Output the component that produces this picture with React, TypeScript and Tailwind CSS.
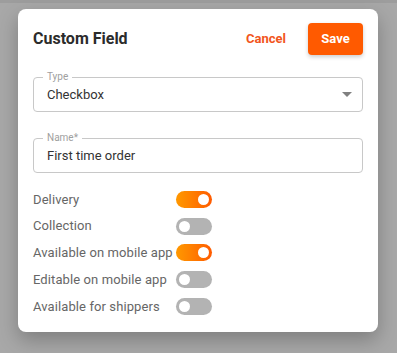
import React, { useState } from 'react'

type Opt = { label: string; on: boolean }

const initial: Opt[] = [
  { label: 'Delivery', on: true },
  { label: 'Collection', on: false },
  { label: 'Available on mobile app', on: true },
  { label: 'Editable on mobile app', on: false },
  { label: 'Available for shippers', on: false },
]

function Toggle({ on, onClick }: { on: boolean; onClick: () => void }) {
  return (
    <button
      onClick={onClick}
      className={`flex items-center w-[36px] h-[17px] rounded-full px-[3px] ${
        on ? 'justify-end bg-gradient-to-r from-[#ff9800] to-[#ff5a00]' : 'justify-start bg-[#b3b3b3]'
      }`}
    >
      <span className="block w-[11px] h-[11px] rounded-full bg-white" />
    </button>
  )
}

export default function App() {
  const [opts, setOpts] = useState(initial)

  return (
    <div className="w-[397px] h-[353px] bg-[#a8a8a8] overflow-hidden" style={{ fontFamily: 'Roboto, "Liberation Sans", sans-serif' }}>
      <div className="h-[3px] bg-[#9d9d9d]" />
      <div className="ml-[18px] mt-[6px] w-[360px] h-[323px] bg-white rounded-[8px] shadow-[0_8px_20px_rgba(0,0,0,0.25)] px-[15px] pt-[14px]">
        {/* header */}
        <div className="flex items-center h-[32px]">
          <h2 className="text-[16px] font-bold text-[#2b2b2b] flex-1">Custom Field</h2>
          <button className="text-[13px] font-bold text-[#f2561d] mr-[22px]">Cancel</button>
          <button className="w-[55px] h-[32px] rounded-[4px] bg-[#ff5a00] text-white text-[13px] font-bold shadow-[0_2px_4px_rgba(0,0,0,0.2)]">
            Save
          </button>
        </div>

        {/* Type */}
        <div className="relative mt-[22px] h-[35px] border border-[#c8c8c8] rounded-[4px] flex items-center pl-[13px] pr-[10px]">
          <span className="absolute -top-[7px] left-[9px] px-[4px] bg-white text-[10px] leading-[12px] text-[#a0a0a0]">Type</span>
          <span className="flex-1 text-[13px] text-[#333]">Checkbox</span>
          <svg width="10" height="5" viewBox="0 0 10 5">
            <path d="M0 0h10L5 5z" fill="#808080" />
          </svg>
        </div>

        {/* Name */}
        <div className="relative mt-[26px] h-[35px] border border-[#c8c8c8] rounded-[4px] flex items-center pl-[13px]">
          <span className="absolute -top-[7px] left-[9px] px-[4px] bg-white text-[10px] leading-[12px] text-[#a0a0a0]">Name*</span>
          <span className="text-[13px] text-[#333]">First time order</span>
        </div>

        {/* toggles */}
        <div className="mt-[13px] flex flex-col">
          {opts.map((o, i) => (
            <div key={o.label} className="flex items-center h-[26.75px]">
              <span className="w-[143px] text-[13px] tracking-[0.1px] text-[#666]">{o.label}</span>
              <Toggle
                on={o.on}
                onClick={() => setOpts(opts.map((x, j) => (j === i ? { ...x, on: !x.on } : x)))}
              />
            </div>
          ))}
        </div>
      </div>
    </div>
  )
}
